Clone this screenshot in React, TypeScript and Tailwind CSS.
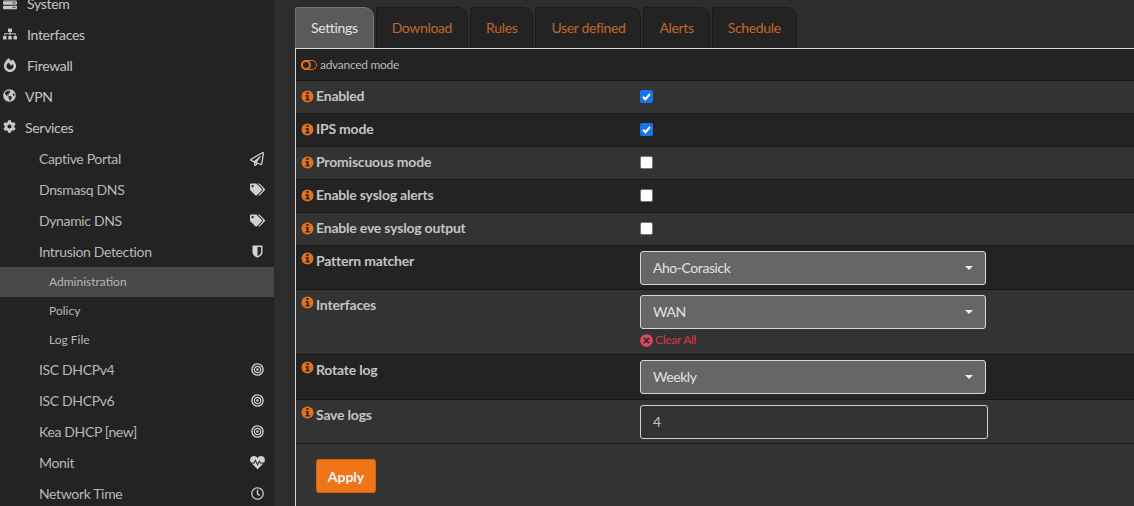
import type { ReactNode } from "react";
import {
  FaServer,
  FaSitemap,
  FaFireAlt,
  FaGlobeAmericas,
  FaCog,
  FaRegPaperPlane,
  FaTags,
  FaHeartbeat,
  FaRegClock,
  FaTimesCircle,
} from "react-icons/fa";

function InfoIcon({ className }: { className?: string }) {
  return (
    <svg width="13" height="13" viewBox="0 0 13 13" className={`shrink-0 ${className ?? ""}`}>
      <circle cx="6.5" cy="6.5" r="6" fill="#e8701a" />
      <path d="M5.4 1.9h2.2v2H5.4z M4.6 5.1h3v3.9h1v1.5H4.6V9h1V6.6h-1z" fill="#2a2a2a" />
    </svg>
  );
}

function Rings() {
  return (
    <svg width="13" height="13" viewBox="0 0 13 13">
      <circle cx="6.5" cy="6.5" r="5.6" fill="none" stroke="#d0d0d0" strokeWidth="1.4" />
      <circle cx="6.5" cy="6.5" r="3.2" fill="none" stroke="#d0d0d0" strokeWidth="1.2" />
      <circle cx="6.5" cy="6.5" r="1.3" fill="#d0d0d0" />
    </svg>
  );
}

function HalfShield() {
  return (
    <svg width="11" height="13" viewBox="0 0 11 13">
      <path d="M0.5 0.5h10v6.5c0 2.8-2.6 4.7-5 5.8-2.4-1.1-5-3-5-5.8z" fill="#d4d4d4" />
      <path d="M5.5 2h3.6v5c0 1.9-1.8 3.3-3.6 4.2z" fill="#2a2a2a" />
    </svg>
  );
}

const topItems = [
  { label: "System", icon: <FaServer size={14} />, pad: "pl-[27px]" },
  { label: "Interfaces", icon: <FaSitemap size={14} />, pad: "pl-[27px]" },
  { label: "Firewall", icon: <FaFireAlt size={14} />, pad: "pl-[27px]" },
  { label: "VPN", icon: <FaGlobeAmericas size={13} />, pad: "pl-[25px]" },
  { label: "Services", icon: <FaCog size={13} />, pad: "pl-[25px]" },
];

const serviceItems = [
  { label: "Captive Portal", icon: <FaRegPaperPlane size={14} /> },
  { label: "Dnsmasq DNS", icon: <FaTags size={15} /> },
  { label: "Dynamic DNS", icon: <FaTags size={15} /> },
  { label: "Intrusion Detection", icon: <HalfShield /> },
];

const moreItems = [
  { label: "ISC DHCPv4", icon: <Rings /> },
  { label: "ISC DHCPv6", icon: <Rings /> },
  { label: "Kea DHCP [new]", icon: <Rings /> },
  { label: "Monit", icon: <FaHeartbeat size={15} /> },
  { label: "Network Time", icon: <FaRegClock size={13} /> },
];

const tabs = ["Settings", "Download", "Rules", "User defined", "Alerts", "Schedule"];

function TopItem({ label, icon, pad }: { label: string; icon: ReactNode; pad: string }) {
  return (
    <div className={`relative flex h-[31px] shrink-0 items-center text-[14px] tracking-[-0.3px] text-[#c4c4c4] ${pad}`}>
      <span className="absolute left-[3px] top-[8px] text-[#c8c8c8]">{icon}</span>
      {label}
    </div>
  );
}

function ServiceItem({ label, icon }: { label: string; icon: ReactNode }) {
  return (
    <div className="flex h-[31px] shrink-0 items-center justify-between pl-[39px] pr-[9px] text-[14px] tracking-[-0.35px] text-[#b8b8b8]">
      {label}
      <span className="flex w-[16px] justify-center text-[#d0d0d0]">{icon}</span>
    </div>
  );
}

function SubItem({ label, className }: { label: string; className: string }) {
  return (
    <div className={`flex shrink-0 items-center pl-[49px] text-[12px] text-[#b8b8b8] ${className}`}>
      {label}
    </div>
  );
}

function Row({
  label,
  h,
  striped,
  top,
  children,
}: {
  label: string;
  h: string;
  striped?: boolean;
  top?: boolean;
  children: ReactNode;
}) {
  return (
    <div className={`flex border-b border-[#171717] ${h} ${striped ? "bg-[#333333]" : "bg-[#232323]"}`}>
      <div
        className={`flex w-[344px] shrink-0 gap-[2px] pl-[5px] text-[14px] font-bold tracking-[-0.2px] text-[#c4c4c4] ${top ? "items-start pt-[4px]" : "items-center pb-[2px]"}`}
      >
        <InfoIcon className={top ? "mt-[2px]" : ""} />
        <span className={top ? "" : "mb-[2px]"}>{label}</span>
      </div>
      <div className="flex-1">{children}</div>
    </div>
  );
}

function Check({ on }: { on?: boolean }) {
  return (
    <div className="flex h-full items-center pb-[2px]">
      {on ? (
        <span className="flex h-[13px] w-[13px] items-center justify-center rounded-[2px] bg-[#1a73e8]">
          <svg width="11" height="11" viewBox="0 0 11 11">
            <path d="M2 5.8 L4.4 8.2 L9 3" fill="none" stroke="#fff" strokeWidth="2" />
          </svg>
        </span>
      ) : (
        <span className="h-[13px] w-[13px] rounded-[2px] border border-[#767676] bg-white" />
      )}
    </div>
  );
}

function Select({ value }: { value: string }) {
  return (
    <div className="flex h-[34px] w-[346px] items-center justify-between rounded-[3px] border border-[#d8d8d8] bg-[#666666] pb-[2px] pl-[12px] pr-[12px] text-[14px] tracking-[-0.45px] text-[#e2e2e2]">
      {value}
      <span className="mt-[2px] h-0 w-0 border-x-[4px] border-t-[4px] border-x-transparent border-t-[#eeeeee]" />
    </div>
  );
}

export default function App() {
  return (
    <div
      className="flex h-[506px] w-[1134px] overflow-hidden bg-[#2d2d2d]"
      style={{ fontFamily: '"Lato", "Noto Sans", sans-serif' }}
    >
      <aside className="flex h-full w-[275px] shrink-0 flex-col overflow-hidden border-r border-[#2b2b2b] bg-[#232323]">
        <div className="mt-[-12px] flex flex-col">
          {topItems.map((item) => (
            <TopItem key={item.label} {...item} />
          ))}
          {serviceItems.map((item) => (
            <ServiceItem key={item.label} {...item} />
          ))}
          <SubItem label="Administration" className="h-[30px] bg-[#484848]" />
          <SubItem label="Policy" className="h-[28px]" />
          <SubItem label="Log File" className="h-[29px]" />
          {moreItems.map((item) => (
            <ServiceItem key={item.label} {...item} />
          ))}
        </div>
      </aside>

      <main className="ml-[20px] flex h-full flex-1 flex-col">
        <div className="mt-[7px] flex h-[41px] gap-[2px] text-[14px] tracking-[-0.35px]">
          {tabs.map((tab, i) => (
            <div
              key={tab}
              className={
                i === 0
                  ? "flex items-center rounded-tr-[10px] rounded-tl-[3px] border-x border-t border-[#777777] bg-[#5a5a5a] px-[15px] pb-[2px] text-[#e4e4e4]"
                  : "flex items-center rounded-tr-[10px] rounded-tl-[3px] border border-b-0 border-[#1a1a1a] bg-[#232323] px-[15px] pb-[2px] text-[#c4662a]"
              }
            >
              {tab}
            </div>
          ))}
        </div>

        <div className="flex flex-1 flex-col border-l border-t border-[#d6d6d6] bg-[#333333]">
          <div className="flex h-[32px] items-center gap-[3px] border-b border-[#171717] bg-[#232323] pl-[5px] text-[12px] tracking-[-0.3px] text-[#b8b8b8]">
            <span className="relative h-[10px] w-[16px] rounded-[5px] border border-[#e8701a]">
              <span className="absolute left-[-1px] top-[-1px] h-[10px] w-[10px] rounded-full border-2 border-[#e8701a]" />
            </span>
            advanced mode
          </div>
          <Row label="Enabled" h="h-[33px]" striped>
            <Check on />
          </Row>
          <Row label="IPS mode" h="h-[33px]">
            <Check on />
          </Row>
          <Row label="Promiscuous mode" h="h-[33px]" striped>
            <Check />
          </Row>
          <Row label="Enable syslog alerts" h="h-[33px]">
            <Check />
          </Row>
          <Row label="Enable eve syslog output" h="h-[33px]" striped>
            <Check />
          </Row>
          <Row label="Pattern matcher" h="h-[44px]" top>
            <div className="pt-[5px]">
              <Select value="Aho-Corasick" />
            </div>
          </Row>
          <Row label="Interfaces" h="h-[65px]" striped top>
            <div className="pt-[5px]">
              <Select value="WAN" />
              <div className="mt-[2px] flex items-center gap-[2px] text-[12px] tracking-[-0.3px] text-[#d9364a]">
                <FaTimesCircle size={13} className="text-[#e0485a]" />
                Clear All
              </div>
            </div>
          </Row>
          <Row label="Rotate log" h="h-[45px]" top>
            <div className="pt-[5px]">
              <Select value="Weekly" />
            </div>
          </Row>
          <Row label="Save logs" h="h-[44px]" striped top>
            <div className="pt-[5px]">
              <div className="flex h-[34px] w-[348px] items-center rounded-[3px] border border-[#d0d0d0] pb-[2px] pl-[12px] text-[14px] text-[#c4c4c4]">
                4
              </div>
            </div>
          </Row>
          <div className="pl-[20px] pt-[15px]">
            <button className="h-[34px] w-[60px] rounded-[3px] border border-[#d96412] bg-[#ee7518] text-[14px] font-bold text-[#f5f5f5]">
              Apply
            </button>
          </div>
        </div>
      </main>
    </div>
  );
}
